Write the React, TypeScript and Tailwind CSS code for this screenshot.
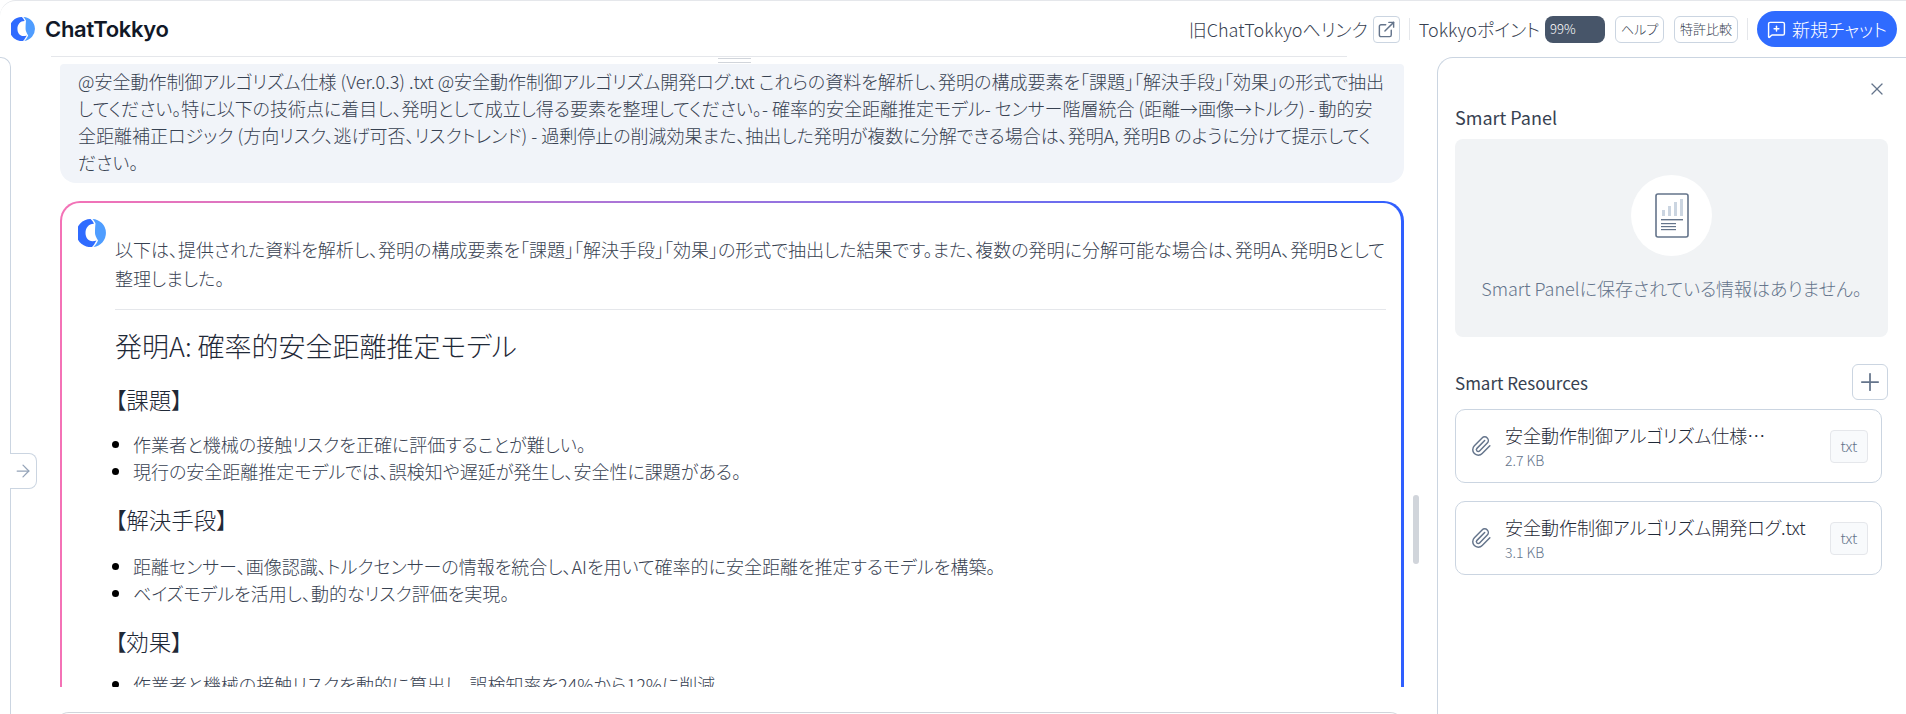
import React from 'react';
import { ArrowRight, ExternalLink, MessageSquarePlus, Paperclip, Plus, X } from 'lucide-react';

// brand mark, two crescents
function Logo({ size }: { size: number }) {
  return (
    <svg width={size} height={size} viewBox="0 0 28 28">
      <path d="M12.5 0.1A14 14 0 1 0 14 28C15.6 26.5 17 24 18.5 21.5C11.4 24.2 7.5 19.4 7.5 14C7.5 8.6 11 4.6 16 4.8C15 3 14 1.2 12.5 0.1Z" fill="#2f6bff" />
      <path d="M14.5 0A14 14 0 0 1 15.5 27.9C17.5 26 19 24 20 21.5C18 18 17 16 17 14C17 10 17.2 7 17.5 4.5C16.8 3 15.8 1.2 14.5 0Z" fill="#4f9dff" />
    </svg>
  );
}

function ResourceCard({ name, size }: { name: string; size: string }) {
  return (
    <div className="w-[427px] h-[74px] shrink-0 flex items-center rounded-[10px] border border-[#cbd5e1] bg-white pl-[14px] pr-[13px]">
      <Paperclip className="w-[22px] h-[22px] text-[#64748b] shrink-0" strokeWidth={1.6} />
      <div className="ml-[13px] w-[305px] min-w-0">
        <div className="whitespace-nowrap text-[18px] leading-[25px] font-light text-[#1f2937]">{name}</div>
        <div className="mt-[3px] text-[14px] leading-[18px] font-light text-[#64748b]">{size}</div>
      </div>
      <span className="ml-auto w-[38px] h-[33px] flex items-center justify-center rounded-[4px] border border-[#e5e7eb] bg-[#f8fafc] text-[15px] font-light text-[#64748b]">txt</span>
    </div>
  );
}

export default function App() {
  return (
    <div className="w-[1906px] h-[714px] overflow-hidden flex flex-col bg-white font-['Noto_Sans_CJK_JP','Noto_Sans',sans-serif] [font-feature-settings:'palt']">
      <header className="h-[57px] shrink-0 flex items-center pl-[11px] pr-[9px] rounded-tl-[16px] border-t border-[#e5e7eb]">
        <Logo size={24} />
        <span className="ml-[10px] font-['Inter',sans-serif] font-semibold text-[22px] tracking-[-0.3px] text-[#111827]">ChatTokkyo</span>
        <div className="ml-auto flex items-center">
          <span className="text-[18px] font-light text-[#374151]">旧ChatTokkyoへリンク</span>
          <span className="ml-[5px] w-[27px] h-[27px] flex items-center justify-center rounded-[4px] border border-[#cbd5e1]">
            <ExternalLink className="w-[19px] h-[19px] text-[#64748b]" strokeWidth={1.8} />
          </span>
          <div className="mx-[9px] w-px h-[22px] bg-[#e5e7eb]" />
          <span className="text-[18px] font-light text-[#374151]">Tokkyoポイント</span>
          <span className="ml-[5px] w-[60px] h-[27px] flex items-center pl-[5px] rounded-[8px] bg-[#475569] text-white text-[13px] font-light">99%</span>
          <span className="ml-[10px] w-[49px] h-[27px] flex items-center justify-center rounded-[6px] border border-[#cbd5e1] text-[13px] font-light text-[#374151]">ヘルプ</span>
          <span className="ml-[10px] w-[64px] h-[27px] flex items-center justify-center rounded-[6px] border border-[#cbd5e1] text-[13px] font-light text-[#374151]">特許比較</span>
          <div className="mx-[9px] w-px h-[22px] bg-[#e5e7eb]" />
          <button className="w-[140px] h-[36px] flex items-center justify-center gap-[6px] rounded-full bg-[#2f6bff] text-white text-[18px] font-light">
            <MessageSquarePlus className="w-[19px] h-[19px]" strokeWidth={1.8} />
            新規チャット
          </button>
        </div>
      </header>

      <div className="flex-1 flex min-h-0">
        {/* collapsed history rail */}
        <div className="relative w-[11px] shrink-0 rounded-tr-[10px] border-t border-r border-[#cbd5e1]">
          <button className="absolute left-[10px] top-[395px] w-[27px] h-[36px] flex items-center justify-center rounded-r-[8px] border border-l-0 border-[#cbd5e1] bg-white">
            <ArrowRight className="w-[20px] h-[20px] text-[#94a3b8]" strokeWidth={1.5} />
          </button>
        </div>

        {/* chat */}
        <main className="relative w-[1426px] shrink-0 flex flex-col min-h-0 pl-[49px] pr-[33px]">
          <div className="-mt-px -ml-[9px] w-[1296px] h-px shrink-0 bg-[#e5e7eb]" />
          <div className="flex-1 min-h-0 overflow-hidden pt-[7px]">
            <div className="rounded-b-[16px] rounded-t-[4px] bg-[#f1f4f9] pl-[18px] pr-[18px] pt-[4px] pb-[7px] text-[18px] leading-[27px] font-light text-[#374151]">
              @安全動作制御アルゴリズム仕様 (Ver.0.3) .txt @安全動作制御アルゴリズム開発ログ.txt これらの資料を解析し、発明の構成要素を「課題」「解決手段」「効果」の形式で抽出してください。特に以下の技術点に着目し、発明として成立し得る要素を整理してください。- 確率的安全距離推定モデル- センサー階層統合 (距離→画像→トルク) - 動的安全距離補正ロジック (方向リスク、逃げ可否、リスクトレンド) - 過剰停止の削減効果また、抽出した発明が複数に分解できる場合は、発明A, 発明B のように分けて提示してください。
            </div>
            <div className="mt-[18px] h-[700px] rounded-[20px] pl-[2px] pt-[2px] pb-[2px] pr-[3px] bg-gradient-to-r from-[#f472b6] to-[#2f5fff]">
              <div className="h-full rounded-[18px] bg-white relative pl-[53px] pr-[15px] pt-[32px]">
                <div className="absolute left-[16px] top-[16px]">
                  <Logo size={28} />
                </div>
                <p className="text-[18px] leading-[29px] font-light text-[#374151]">以下は、提供された資料を解析し、発明の構成要素を「課題」「解決手段」「効果」の形式で抽出した結果です。また、複数の発明に分解可能な場合は、発明A、発明Bとして整理しました。</p>
                <hr className="mt-[16px] border-[#e5e7eb]" />
                <h2 className="mt-[16px] text-[27px] leading-[40px] font-light text-[#1f2937]">発明A: 確率的安全距離推定モデル</h2>
                <h3 className="mt-[16px] text-[22.5px] leading-[34px] font-light text-[#1f2937]">【課題】</h3>
                <ul className="mt-[15px] list-disc pl-[18px] text-[18px] leading-[27px] font-light text-[#374151] marker:text-black">
                  <li>作業者と機械の接触リスクを正確に評価することが難しい。</li>
                  <li>現行の安全距離推定モデルでは、誤検知や遅延が発生し、安全性に課題がある。</li>
                </ul>
                <h3 className="mt-[17px] text-[22.5px] leading-[34px] font-light text-[#1f2937]">【解決手段】</h3>
                <ul className="mt-[17px] list-disc pl-[18px] text-[18px] leading-[27px] font-light text-[#374151] marker:text-black">
                  <li>距離センサー、画像認識、トルクセンサーの情報を統合し、AIを用いて確率的に安全距離を推定するモデルを構築。</li>
                  <li>ベイズモデルを活用し、動的なリスク評価を実現。</li>
                </ul>
                <h3 className="mt-[17px] text-[22.5px] leading-[34px] font-light text-[#1f2937]">【効果】</h3>
                <ul className="mt-[13px] list-disc pl-[18px] text-[18px] leading-[27px] font-light text-[#374151] marker:text-black">
                  <li>作業者と機械の接触リスクを動的に算出し、誤検知率を24%から12%に削減。</li>
                </ul>
              </div>
            </div>
          </div>
          <div className="h-[27px] shrink-0 relative">
            <div className="absolute -left-[5px] right-0 top-[25px] h-[20px] rounded-t-[14px] border-t border-[#d1d5db]" />
          </div>
          {/* scrollbar and resize handle lie over the thread */}
          <div className="absolute right-[18px] top-[438px] w-[6px] h-[69px] rounded-full bg-[#d1d5db]" />
          <div className="absolute left-[707px] top-[1px] w-[33px] h-[5px] border-y border-[#d1d5db] bg-white" />
        </main>

        {/* smart panel */}
        <aside className="flex-1 min-w-0 rounded-tl-[16px] border-t border-l border-[#cbd5e1] pl-[17px] pr-[18px] relative">
          <X className="absolute right-[19px] top-[21px] w-[20px] h-[20px] text-[#64748b]" strokeWidth={1.5} />
          <h2 className="mt-[46px] text-[18px] leading-[26px] text-[#374151]">Smart Panel</h2>
          <div className="mt-[9px] w-[433px] h-[198px] rounded-[8px] bg-[#f1f3f5] flex flex-col items-center pt-[36px]">
            <div className="w-[81px] h-[81px] rounded-full bg-white flex items-center justify-center">
              <svg width="36" height="46" viewBox="0 0 36 46">
                <rect x="2" y="1" width="32" height="43" rx="2" fill="none" stroke="#64748b" strokeWidth="1.6" />
                <rect x="8" y="17" width="3" height="6" fill="#cbd5e1" />
                <rect x="14" y="13" width="3" height="10" fill="#cbd5e1" />
                <rect x="20" y="9" width="3" height="14" fill="#cbd5e1" />
                <rect x="26" y="6" width="3" height="17" fill="#cbd5e1" />
                <rect x="7" y="26" width="22" height="1.4" fill="#64748b" />
                <rect x="7" y="30" width="15" height="1.2" fill="#64748b" />
                <rect x="7" y="33" width="15" height="1.2" fill="#64748b" />
                <rect x="7" y="36" width="15" height="1.2" fill="#64748b" />
              </svg>
            </div>
            <p className="mt-[19px] text-[18px] leading-[26px] font-light text-[#64748b]">Smart Panelに保存されている情報はありません。</p>
          </div>
          <div className="mt-[27px] flex items-center justify-between">
            <h2 className="pt-[2px] text-[17px] leading-[24px] text-[#374151]">Smart Resources</h2>
            <button className="w-[36px] h-[36px] flex items-center justify-center rounded-[6px] border border-[#cbd5e1]">
              <Plus className="w-[28px] h-[28px] text-[#64748b]" strokeWidth={1.5} />
            </button>
          </div>
          <div className="mt-[9px] flex flex-col gap-[18px]">
            <ResourceCard name="安全動作制御アルゴリズム仕様…" size="2.7 KB" />
            <ResourceCard name="安全動作制御アルゴリズム開発ログ.txt" size="3.1 KB" />
          </div>
        </aside>
      </div>
    </div>
  );
}
